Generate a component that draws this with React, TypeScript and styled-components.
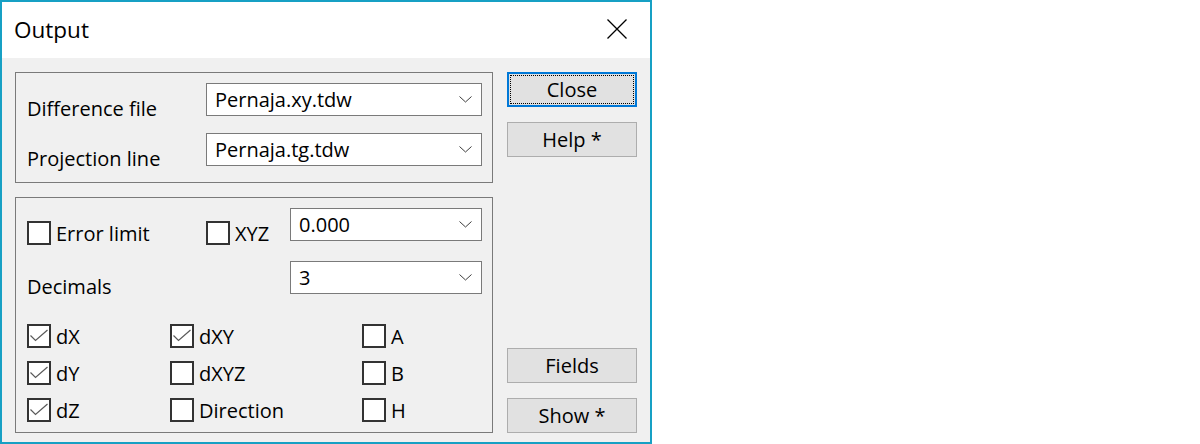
import React from 'react'
import styled, { createGlobalStyle } from 'styled-components'

const GlobalStyle = createGlobalStyle`
  html, body {
    margin: 0;
    padding: 0;
    background: #ffffff;
  }
  body {
    font-family: 'Open Sans', 'Noto Sans', sans-serif;
  }
`

const Window = styled.div`
  width: 652px;
  height: 444px;
  box-sizing: border-box;
  border: 2px solid #17a0c4;
  display: flex;
  flex-direction: column;
  background: #f0f0f0;
  color: #000;
  font-size: 20px;
`
const TitleBar = styled.div`
  height: 56px;
  flex-shrink: 0;
  background: #ffffff;
  display: flex;
  align-items: center;
  justify-content: space-between;
  padding-left: 12px;
`
const Title = styled.span`
  font-size: 22.5px;
  line-height: 28px;
`
const CloseIcon = styled.svg`
  margin-right: 23px;
  margin-bottom: 2px;
`
const Body = styled.div`
  flex: 1;
  display: flex;
  gap: 14px;
  padding: 14px 13px 9px 13px;
`
const LeftCol = styled.div`
  width: 478px;
  display: flex;
  flex-direction: column;
  gap: 14px;
`
const Group = styled.div`
  box-sizing: border-box;
  border: 1px solid #7a7a7a;
`
const FileGroup = styled(Group)`
  display: grid;
  grid-template-columns: 179px 276px;
  grid-auto-rows: 33px;
  row-gap: 17px;
  padding: 10px 10px 16px 11px;
`
const OptionsGroup = styled(Group)`
  display: flex;
  flex-direction: column;
  padding: 10px 10px 10px 11px;
`
const TopGrid = styled.div`
  display: grid;
  grid-template-columns: 179px 84px 192px;
  grid-template-rows: 33px 33px;
  row-gap: 20px;
`
const CheckGrid = styled.div`
  margin-top: 30px;
  display: grid;
  grid-template-columns: 143px 192px 1fr;
  grid-auto-rows: 24px;
  row-gap: 13px;
`
const Label = styled.span<{ $span?: number }>`
  padding-top: 14px;
  line-height: 24px;
  white-space: nowrap;
  grid-column: span ${(p) => p.$span ?? 1};
`
const Combo = styled.div`
  box-sizing: border-box;
  height: 33px;
  display: flex;
  align-items: center;
  justify-content: space-between;
  background: #ffffff;
  border: 1px solid #7a7a7a;
  padding: 0 9px 0 8px;
  line-height: 24px;
`
const CheckCell = styled.div<{ $top?: number }>`
  display: flex;
  align-items: flex-start;
  gap: 5px;
  padding-top: ${(p) => p.$top ?? 0}px;
`
const Box = styled.span`
  box-sizing: border-box;
  width: 24px;
  height: 24px;
  flex-shrink: 0;
  border: 2px solid #333333;
  background: #ffffff;
  display: flex;
`
const CheckText = styled.span`
  line-height: 24px;
  padding-top: 1px;
  white-space: nowrap;
`
const RightCol = styled.div`
  width: 130px;
  display: flex;
  flex-direction: column;
  justify-content: space-between;
`
const ButtonStack = styled.div`
  display: flex;
  flex-direction: column;
  gap: 15px;
`
const Button = styled.button<{ $focused?: boolean }>`
  box-sizing: border-box;
  width: 130px;
  height: 35px;
  padding: 0;
  background: #e1e1e1;
  color: #000;
  font: inherit;
  font-size: 20px;
  line-height: 24px;
  border: ${(p) => (p.$focused ? '2px solid #0078d7' : '1px solid #adadad')};
  outline: ${(p) => (p.$focused ? '1px dotted #000' : 'none')};
  outline-offset: -4px;
`

const Chevron = () => (
  <svg width="13" height="7" viewBox="0 0 13 7">
    <path d="M0.5 0.5 L6.5 6 L12.5 0.5" fill="none" stroke="#3c3c3c" strokeWidth="1" />
  </svg>
)

const Select = ({ value }: { value: string }) => (
  <Combo>
    <span>{value}</span>
    <Chevron />
  </Combo>
)

const Check = ({ label, checked, top }: { label: string; checked?: boolean; top?: number }) => (
  <CheckCell $top={top}>
    <Box>
      {checked && (
        <svg width="20" height="20" viewBox="0 0 20 20">
          <path d="M1.5 9.5 L6.5 14.5 L18.5 4" fill="none" stroke="#5a5a5a" strokeWidth="1.2" />
        </svg>
      )}
    </Box>
    <CheckText>{label}</CheckText>
  </CheckCell>
)

export default function App() {
  return (
    <>
      <GlobalStyle />
      <Window>
        <TitleBar>
          <Title>Output</Title>
          <CloseIcon width="20" height="20" viewBox="0 0 20 20">
            <path d="M0.5 0.5 L19.5 19.5 M19.5 0.5 L0.5 19.5" stroke="#000" strokeWidth="1.3" />
          </CloseIcon>
        </TitleBar>
        <Body>
          <LeftCol>
            <FileGroup>
              <Label>Difference file</Label>
              <Select value="Pernaja.xy.tdw" />
              <Label>Projection line</Label>
              <Select value="Pernaja.tg.tdw" />
            </FileGroup>
            <OptionsGroup>
              <TopGrid>
                <Check label="Error limit" top={13} />
                <Check label="XYZ" top={13} />
                <Select value="0.000" />
                <Label $span={2}>Decimals</Label>
                <Select value="3" />
              </TopGrid>
              <CheckGrid>
                <Check label="dX" checked />
                <Check label="dXY" checked />
                <Check label="A" />
                <Check label="dY" checked />
                <Check label="dXYZ" />
                <Check label="B" />
                <Check label="dZ" checked />
                <Check label="Direction" />
                <Check label="H" />
              </CheckGrid>
            </OptionsGroup>
          </LeftCol>
          <RightCol>
            <ButtonStack>
              <Button $focused>Close</Button>
              <Button>Help *</Button>
            </ButtonStack>
            <ButtonStack>
              <Button>Fields</Button>
              <Button>Show *</Button>
            </ButtonStack>
          </RightCol>
        </Body>
      </Window>
    </>
  )
}
